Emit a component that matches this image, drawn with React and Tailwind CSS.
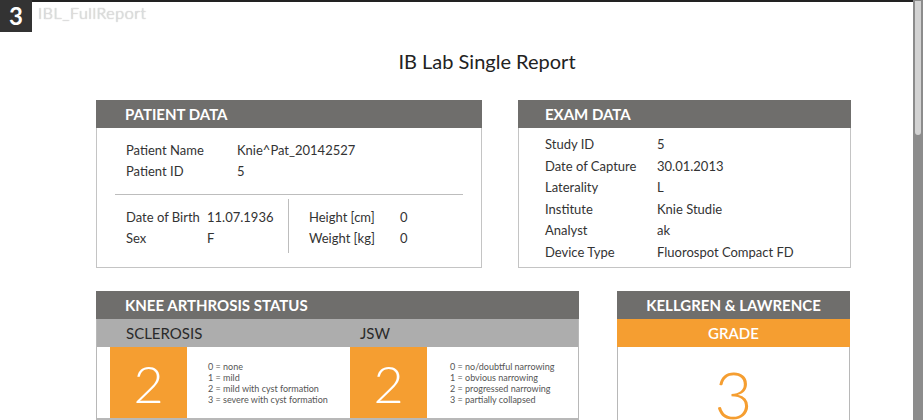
import React from "react";

const HeaderBar = ({ children, className = "" }) => (
  <div className={`h-[28px] bg-[#6f6e6c] text-white text-[15px] font-bold leading-[28px] ${className}`}>
    {children}
  </div>
);

const Row = ({ label, value, w, h = "h-[21px] leading-[21px]" }) => (
  <div className={`flex ${h}`}>
    <div className={`${w} shrink-0`}>{label}</div>
    <div>{value}</div>
  </div>
);

const Legend = ({ lines, className = "" }) => (
  <div className={`flex flex-col justify-center text-[9px] leading-[11px] text-[#555] ${className}`}>
    {lines.map((l) => (
      <div key={l}>{l}</div>
    ))}
  </div>
);

const BigBox = ({ n }) => (
  <div className="w-[77px] h-full shrink-0 bg-[#f59e31] flex items-center justify-center text-white text-[52px] font-light leading-none">
    {n}
  </div>
);

export default function App() {
  return (
    <div className="flex h-[420px] w-[923px] overflow-hidden bg-white font-['Lato',sans-serif] text-[#333]">
      <div className="flex-1 flex flex-col">
        <div className="flex h-[32px] shrink-0">
          <div className="w-[32px] h-[32px] bg-[#333] text-white text-[24px] font-bold flex items-center justify-center leading-none">
            3
          </div>
          <div className="flex-1 border-t-2 border-[#222] pl-[6px] text-[16px] font-light tracking-[0.6px] leading-[18px] pt-[2px] text-[#e4e4e4] [text-shadow:0_0_1px_#9a9a9a]">
            IBL_FullReport
          </div>
        </div>

        <div className="mt-[17px] pl-[61px] text-center text-[20px] leading-[24px] text-[#222]">
          IB Lab Single Report
        </div>

        <div className="mt-[27px] flex pl-[96px] gap-[36px] items-start">
          <div className="w-[386px] h-[168px] border-x border-b border-[#c4c4c4] text-[13px]">
            <HeaderBar className="pl-[29px] -mx-px">PATIENT DATA</HeaderBar>
            <div className="pt-[12px] pl-[29px]">
              <Row label="Patient Name" value="Knie^Pat_20142527" w="w-[111px]" />
              <Row label="Patient ID" value="5" w="w-[111px]" />
            </div>
            <div className="mx-[18px] mt-[12px] border-t border-[#bdbdbd]" />
            <div className="flex">
              <div className="mt-[4px] w-[192px] border-r border-[#bdbdbd] pl-[29px] pt-[8px] pb-[4px]">
                <Row label="Date of Birth" value="11.07.1936" w="w-[81px]" />
                <Row label="Sex" value="F" w="w-[81px]" />
              </div>
              <div className="mt-[4px] pl-[20px] pt-[8px]">
                <Row label="Height [cm]" value="0" w="w-[91px]" />
                <Row label="Weight [kg]" value="0" w="w-[91px]" />
              </div>
            </div>
          </div>

          <div className="w-[333px] h-[168px] border-x border-b border-[#c4c4c4] text-[13px]">
            <HeaderBar className="pl-[27px] -mx-px">EXAM DATA</HeaderBar>
            <div className="pt-[6px] pl-[26px]">
              {[
                ["Study ID", "5"],
                ["Date of Capture", "30.01.2013"],
                ["Laterality", "L"],
                ["Institute", "Knie Studie"],
                ["Analyst", "ak"],
                ["Device Type", "Fluorospot Compact FD"],
              ].map(([l, v]) => (
                <Row key={l} label={l} value={v} w="w-[112px]" h="h-[21.6px] leading-[21.6px]" />
              ))}
            </div>
          </div>
        </div>

        <div className="mt-[23px] flex pl-[96px] gap-[38px] items-start">
          <div className="w-[483px] border-x border-b-2 border-[#b8b8b8]">
            <HeaderBar className="pl-[29px] -mx-px">KNEE ARTHROSIS STATUS</HeaderBar>
            <div className="h-[28px] bg-[#adadad] flex pl-[29px] text-[15px] leading-[28px] text-[#2a2a2a]">
              <div className="w-[234px]">SCLEROSIS</div>
              <div>JSW</div>
            </div>
            <div className="h-[71px] flex">
              <div className="w-[253px] pl-[13px] flex h-full">
                <BigBox n="2" />
                <Legend
                  className="ml-[21px]"
                  lines={["0 = none", "1 = mild", "2 = mild with cyst formation", "3 = severe with cyst formation"]}
                />
              </div>
              <div className="flex h-full">
                <BigBox n="2" />
                <Legend
                  className="ml-[23px]"
                  lines={["0 = no/doubtful narrowing", "1 = obvious narrowing", "2 = progressed narrowing", "3 = partially collapsed"]}
                />
              </div>
            </div>
          </div>

          <div className="w-[233px] h-[140px] border-x border-[#b8b8b8]">
            <HeaderBar className="text-center -mx-px">KELLGREN &amp; LAWRENCE</HeaderBar>
            <div className="-mx-px h-[28px] bg-[#f59e31] text-white text-[15px] font-semibold leading-[28px] text-center">
              GRADE
            </div>
            <div className="pt-[14px] text-center text-[66px] font-light leading-none text-[#f59e31]">3</div>
          </div>
        </div>
      </div>

      <div className="w-[10px] shrink-0 bg-[#8c8c8c] pt-px pl-[2px]">
        <div className="w-[6px] h-[134px] bg-[#d3d3d3] rounded-b-[3px]" />
      </div>
    </div>
  );
}
